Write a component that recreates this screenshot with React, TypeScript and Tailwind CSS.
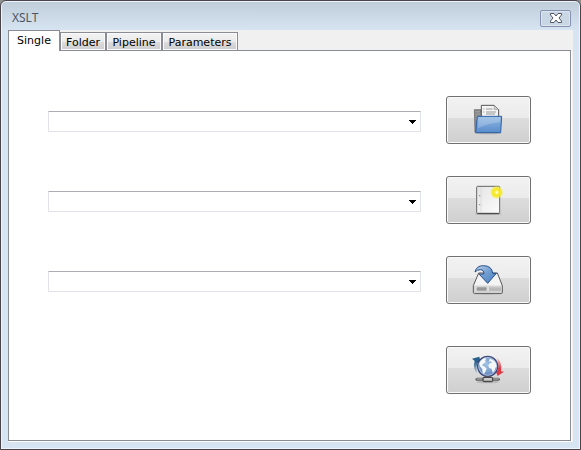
import { useState, type ReactNode } from "react";

const tabs = [
  { name: "Single", width: "w-[52px]" },
  { name: "Folder", width: "w-[46px]" },
  { name: "Pipeline", width: "w-[56px]" },
  { name: "Parameters", width: "w-[76px]" },
];

function OpenIcon() {
  return (
    <svg viewBox="0 0 96 96" className="h-8 w-8" aria-hidden="true">
      <defs>
        <linearGradient id="folder" x1="0" y1="0" x2="0" y2="1">
          <stop offset="0" stopColor="#90b8e4" />
          <stop offset="1" stopColor="#5a8ccb" />
        </linearGradient>
      </defs>
      <ellipse cx="48" cy="87" rx="40" ry="4" fill="#999" opacity=".6" />
      <path d="M7 17h20v8h52v60H9z" fill="#8a8a8a" stroke="#5c5c5c" strokeWidth="2" />
      <path d="M10 23h14M10 30h14M10 37h14M10 44h8" stroke="#aaa" strokeWidth="2" />
      <path d="M28 4h38l14 13v28H28z" fill="#f4f4f4" stroke="#555" strokeWidth="3" />
      <path d="M66 4v13h14z" fill="#ccc" stroke="#777" strokeWidth="1" />
      <path d="M34 15h3M42 15h20M34 24h3M42 24h30M42 30h27" stroke="#888" strokeWidth="2.5" />
      <path d="M16 37h73l-3 49H11z" fill="url(#folder)" stroke="#2f62a7" strokeWidth="3" />
      <path d="M19 40h67l-2 15q-35 3-66 18z" fill="#fff" opacity=".2" />
    </svg>
  );
}

function NewIcon() {
  return (
    <svg viewBox="0 0 96 96" className="h-8 w-8" aria-hidden="true">
      <defs>
        <radialGradient id="glow">
          <stop offset="0" stopColor="#fffff0" />
          <stop offset=".25" stopColor="#fff56a" />
          <stop offset=".4" stopColor="#f8e51c" />
          <stop offset=".72" stopColor="#f5ec28" stopOpacity=".85" />
          <stop offset="1" stopColor="#f5ec28" stopOpacity="0" />
        </radialGradient>
        <linearGradient id="sheet" x1="1" y1="1" x2="0" y2="0">
          <stop offset="0" stopColor="#fcfcfc" />
          <stop offset="1" stopColor="#e4e4e4" />
        </linearGradient>
      </defs>
      <ellipse cx="49" cy="90" rx="40" ry="3" fill="#999" opacity=".6" />
      <rect x="14" y="7" width="69" height="82" rx="3" fill="url(#sheet)" stroke="#666" strokeWidth="3" />
      <path d="M16 88h65" stroke="#444" strokeWidth="3" />
      <path d="M27 10v76" stroke="#ccc" strokeWidth="1.5" />
      <circle cx="23" cy="35" r="2" fill="#888" />
      <circle cx="23" cy="62" r="2" fill="#888" />
      <circle cx="74" cy="25" r="20" fill="url(#glow)" />
    </svg>
  );
}

function SaveIcon() {
  return (
    <svg viewBox="0 0 96 96" className="h-8 w-8" aria-hidden="true">
      <defs>
        <linearGradient id="arrow" x1="0" y1="0" x2="1" y2="1">
          <stop offset="0" stopColor="#bfd4e8" />
          <stop offset=".5" stopColor="#6f9cd0" />
          <stop offset="1" stopColor="#4a7fbf" />
        </linearGradient>
      </defs>
      <ellipse cx="48" cy="89" rx="44" ry="4" fill="#aaa" opacity=".6" />
      <path d="M20 27h56l15 38v21q0 2-2 2H7q-3 0-3-3V65z" fill="#f4f4f4" stroke="#555" strokeWidth="3" />
      <path d="M7 66h82v18H7z" fill="#dedede" stroke="#a5a5a5" strokeWidth="1" />
      <rect x="14" y="70" width="30" height="10" rx="2" fill="#999" />
      <path d="M54 70v11M60 70v11M66 70v11M72 70v11M78 70v11M84 70v11" stroke="#888" strokeWidth="2.5" />
      <path
        d="M9 24Q13 5 34 5Q60 5 62 28H73L47 58L21 30H36Q36 17 25 17Q15 17 9 24z"
        fill="url(#arrow)"
        stroke="#244f8e"
        strokeWidth="3"
        strokeLinejoin="round"
      />
    </svg>
  );
}

function TransformIcon() {
  return (
    <svg viewBox="0 0 96 96" className="h-8 w-8" aria-hidden="true">
      <defs>
        <radialGradient id="ocean" cx=".45" cy=".4">
          <stop offset="0" stopColor="#a3c4e6" />
          <stop offset="1" stopColor="#6c90c2" />
        </radialGradient>
        <linearGradient id="red" x1="0" y1="0" x2="0" y2="1">
          <stop offset="0" stopColor="#e33" stopOpacity=".1" />
          <stop offset=".6" stopColor="#dc3a44" />
        </linearGradient>
        <linearGradient id="blue" x1="0" y1="0" x2="0" y2="1">
          <stop offset=".3" stopColor="#2a608e" />
          <stop offset="1" stopColor="#2d659c" stopOpacity=".1" />
        </linearGradient>
      </defs>
      <path d="M0 14L22 8L27 28L19 24Q10 38 16 60Q1 43 8 21z" fill="url(#blue)" />
      <path d="M72 10Q92 24 87 52L96 53L77 66L69 47L77 50Q83 30 72 10z" fill="url(#red)" />
      <circle cx="47" cy="37" r="30" fill="url(#ocean)" stroke="#3b4677" strokeWidth="4" />
      <circle cx="47" cy="37" r="27" fill="none" stroke="#dce6f2" strokeWidth="2" opacity=".8" />
      <path d="M22 29Q26 17 38 12L43 14L39 20L42 24L34 29L30 34L38 38L44 44L41 51L36 60L32 56L31 45L24 37z" fill="#f8f9fa" />
      <path d="M53 14Q64 15 71 26L74 37L70 42L67 51L62 56L59 45L51 41L49 34L53 28L60 26L56 22L51 24z" fill="#f4f6f8" />
      <ellipse cx="47" cy="84" rx="34" ry="4" fill="#999" opacity=".5" />
      <path d="M15 76h64" stroke="#555" strokeWidth="9" strokeLinecap="round" />
      <path d="M15 75h64" stroke="#c8c8c8" strokeWidth="3" strokeLinecap="round" />
      <path d="M40 67h15v5H40z" fill="#666" />
      <rect x="33" y="70" width="29" height="13" rx="3" fill="#aaa" stroke="#333" strokeWidth="3" />
      <path d="M37 75h21" stroke="#eee" strokeWidth="3" />
    </svg>
  );
}

function ActionButton({ label, children }: { label: string; children: ReactNode }) {
  return (
    <button
      type="button"
      aria-label={label}
      className="flex h-12 w-[85px] shrink-0 items-center justify-center rounded-[3px] border border-[#707070] bg-[linear-gradient(#f2f2f2,#ebebeb_46%,#dddddd_46%,#cfcfcf)] pr-px shadow-[inset_0_0_0_1px_#fafafa]"
    >
      {children}
    </button>
  );
}

function FileRow({ label, children }: { label: string; children: ReactNode }) {
  return (
    <div className="flex items-center gap-[25px]">
      <div className="relative mb-[-2px] h-[21px] flex-1">
        <select
          aria-label={label}
          className="block h-full w-full appearance-none rounded-[1px] border border-[#e2e3ea] border-t-[#abadb3] bg-white px-1 font-['DejaVu_Sans',sans-serif] text-[11px]"
        >
          <option value=""></option>
        </select>
        <svg viewBox="0 0 8 4" shapeRendering="crispEdges" className="pointer-events-none absolute top-[9px] right-[5px] h-1 w-2" aria-hidden="true">
          <path d="M0 0h8L4 4z" fill="#000" />
        </svg>
      </div>
      <ActionButton label={label}>{children}</ActionButton>
    </div>
  );
}

export default function App() {
  const [active, setActive] = useState("Single");

  return (
    <div className="h-screen bg-[#8f8f8f]">
      <div className="flex h-full flex-col rounded-t-[6px] border border-[#494449] bg-[#d7e4f2] bg-[linear-gradient(#bfcddb,#d7e4f2_30px)] px-[7px] pb-[7px] shadow-[inset_0_0_0_1px_#edf4fb]">
        <header className="flex h-[29px] shrink-0 items-center justify-between pt-[5px] pr-0.5 pl-1">
          <h1 className="font-['Noto_Sans',sans-serif] text-xs text-[#4f5661]">XSLT</h1>
          <button
            type="button"
            aria-label="Close"
            className="flex h-[17px] w-[31px] items-center justify-center rounded-[2px] border border-[#8591ae] bg-[#c9d7e5] shadow-[inset_0_0_0_1px_#dce6f0]"
          >
            <svg viewBox="0 0 12 10" className="h-[10px] w-3" aria-hidden="true">
              <path d="M.5 .5H4L6 3L8 .5h3.500V2L9 5l2.500 3v1.500H8L6 7L4 9.500H.5V8L3 5L.5 2z" fill="#fff" stroke="#535666" />
            </svg>
          </button>
        </header>

        <main className="flex flex-1 flex-col bg-[#f0f0f0] font-['DejaVu_Sans',sans-serif] text-[11px] text-black">
          <div role="tablist" className="relative z-10 -mb-px flex h-[21px] shrink-0 items-end">
            {tabs.map((tab) => (
              <button
                key={tab.name}
                type="button"
                role="tab"
                aria-selected={active === tab.name}
                onClick={() => setActive(tab.name)}
                className={`${tab.width} border border-[#898c95] ${
                  active === tab.name
                    ? "h-[21px] border-b-0 bg-white"
                    : "h-[19px] bg-[linear-gradient(#f3f3f3,#ebebeb_50%,#dddddd_50%,#cdcdcd)] pt-0.5 shadow-[inset_0_0_0_1px_#fafafa]"
                }`}
              >
                {tab.name}
              </button>
            ))}
          </div>
          <section
            role="tabpanel"
            aria-label={active}
            className="mr-0.5 mb-px flex flex-1 flex-col gap-8 border border-[#898c95] bg-white pt-[45px] pr-[39px] pl-[39px] shadow-[1px_1px_0_#fff]"
          >
            <FileRow label="Open source file">
              <OpenIcon />
            </FileRow>
            <FileRow label="New stylesheet">
              <NewIcon />
            </FileRow>
            <FileRow label="Save output file">
              <SaveIcon />
            </FileRow>
            <div className="flex justify-end pt-[10px]">
              <ActionButton label="Transform">
                <TransformIcon />
              </ActionButton>
            </div>
          </section>
        </main>
      </div>
    </div>
  );
}
